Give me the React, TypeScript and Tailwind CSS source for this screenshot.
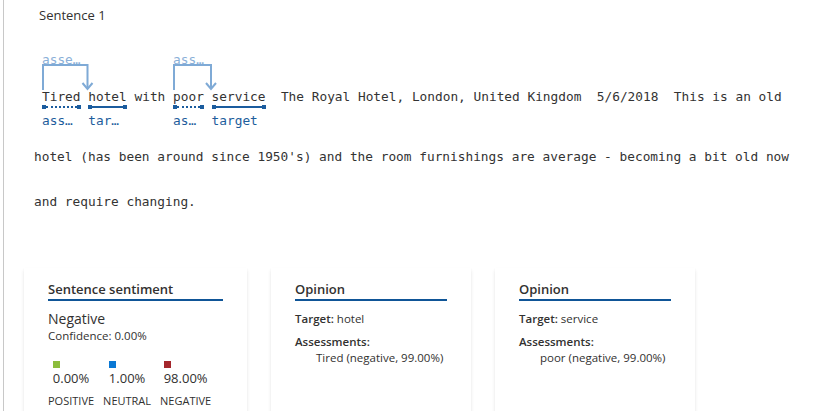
type SegProps = {
  text: string;
  top?: string;
  arrow?: number;
  line?: 'dotted' | 'solid';
  bottom?: string;
};

function Seg({ text, top, arrow, line, bottom }: SegProps) {
  return (
    <div className="flex flex-col">
      <div className="relative h-[37px]">
        {top && arrow && (
          <>
            <span className="absolute left-0 top-0 whitespace-pre leading-[18px] text-[#8bb0d8]">{top}</span>
            <svg
              className="absolute left-0 top-0 overflow-visible"
              width={arrow + 6}
              height={39}
              fill="none"
              stroke="#7faad6"
              strokeWidth={2}
            >
              <path d={`M1 39 V14 H${arrow} V38`} />
              <path d={`M${arrow - 5} 32 L${arrow} 38 L${arrow + 5} 32`} />
            </svg>
          </>
        )}
      </div>
      <div className="h-[17px] whitespace-pre leading-[17px] text-[#333]">{text}</div>
      <div className="flex h-[4px] items-center">
        {line && (
          <>
            <div className="h-[4px] w-[4px] bg-[#1b5c9e]" />
            <div
              className={
                line === 'dotted'
                  ? 'flex-1 border-t-2 border-dotted border-[#1b5c9e]'
                  : 'flex-1 border-t-2 border-solid border-[#1b5c9e]'
              }
            />
            <div className="h-[4px] w-[4px] bg-[#1b5c9e]" />
          </>
        )}
      </div>
      <div className="mt-[2px] h-[20px] whitespace-pre leading-[20px] text-[#1d5d9c]">{bottom ?? ''}</div>
    </div>
  );
}

function Card({ width, title, children }: { width: string; title: string; children: React.ReactNode }) {
  return (
    <div
      className={`${width} h-[170px] shrink-0 bg-white px-[24px] pt-[12px] shadow-[0_1.6px_3.6px_rgba(0,0,0,0.10),0_0.3px_0.9px_rgba(0,0,0,0.08)]`}
    >
      <div className="border-b-2 border-[#0f5597] text-[13px] font-semibold leading-[19px] text-[#323130]">{title}</div>
      {children}
    </div>
  );
}

function Score({ color, value, label }: { color: string; value: string; label: string }) {
  return (
    <div className="flex flex-col items-center">
      <div className="flex flex-col items-start">
        <div className={`h-[7px] w-[7px] ${color}`} />
        <div className="text-[13px] leading-[20px]">{value}</div>
      </div>
      <div className="mt-[5px] whitespace-nowrap text-[11px] leading-[16px]">{label}</div>
    </div>
  );
}

export default function App() {
  return (
    <div className="flex h-[411px] w-[833px] overflow-hidden bg-white font-['Segoe_UI','Open_Sans',sans-serif] text-[#323130]">
      <div className="ml-[3px] h-full w-px shrink-0 bg-[#c8c8c8]" />
      <div className="flex flex-1 flex-col">
        <div className="pl-[35px] pt-[5px] text-[13px] leading-[20px]">Sentence 1</div>

        <div className="pl-[30px] font-['DejaVu_Sans_Mono',monospace] text-[12.8px]">
          <div className="ml-[8px] mt-[26px] flex">
            <Seg text="Tired" top="asse…" arrow={45.5} line="dotted" bottom="ass…" />
            <Seg text=" " />
            <Seg text="hotel" line="solid" bottom="tar…" />
            <Seg text=" with " />
            <Seg text="poor" top="ass…" arrow={38} line="dotted" bottom="as…" />
            <Seg text=" " />
            <Seg text="service" line="solid" bottom="target" />
            <Seg text="  The Royal Hotel, London, United Kingdom  5/6/2018  This is an old" />
          </div>
          <div className="mt-[3px] whitespace-pre leading-[45px] text-[#333]">
            hotel (has been around since 1950's) and the room furnishings are average - becoming a bit old now
          </div>
          <div className="whitespace-pre leading-[45px] text-[#333]">and require changing.</div>
        </div>

        <div className="mt-[44px] flex gap-[24px] pl-[20px]">
          <Card width="w-[223px]" title="Sentence sentiment">
            <div className="mt-[9px] text-[14px] leading-[18px]">Negative</div>
            <div className="text-[11.5px] leading-[16px]">Confidence: 0.00%</div>
            <div className="mt-[17px] flex gap-[9px]">
              <Score color="bg-[#8cbd3c]" value="0.00%" label="POSITIVE" />
              <Score color="bg-[#0a78d4]" value="1.00%" label="NEUTRAL" />
              <Score color="bg-[#a4262c]" value="98.00%" label="NEGATIVE" />
            </div>
          </Card>
          <Card width="w-[200px]" title="Opinion">
            <div className="mt-[9px] text-[11.5px] leading-[18px]">
              <span className="font-semibold">Target:</span> hotel
            </div>
            <div className="mt-[6px] text-[11.5px] font-semibold leading-[16px]">Assessments:</div>
            <div className="whitespace-nowrap pl-[21px] text-[11.5px] leading-[16px]">Tired (negative, 99.00%)</div>
          </Card>
          <Card width="w-[200px]" title="Opinion">
            <div className="mt-[9px] text-[11.5px] leading-[18px]">
              <span className="font-semibold">Target:</span> service
            </div>
            <div className="mt-[6px] text-[11.5px] font-semibold leading-[16px]">Assessments:</div>
            <div className="whitespace-nowrap pl-[21px] text-[11.5px] leading-[16px]">poor (negative, 99.00%)</div>
          </Card>
        </div>
      </div>
    </div>
  );
}
